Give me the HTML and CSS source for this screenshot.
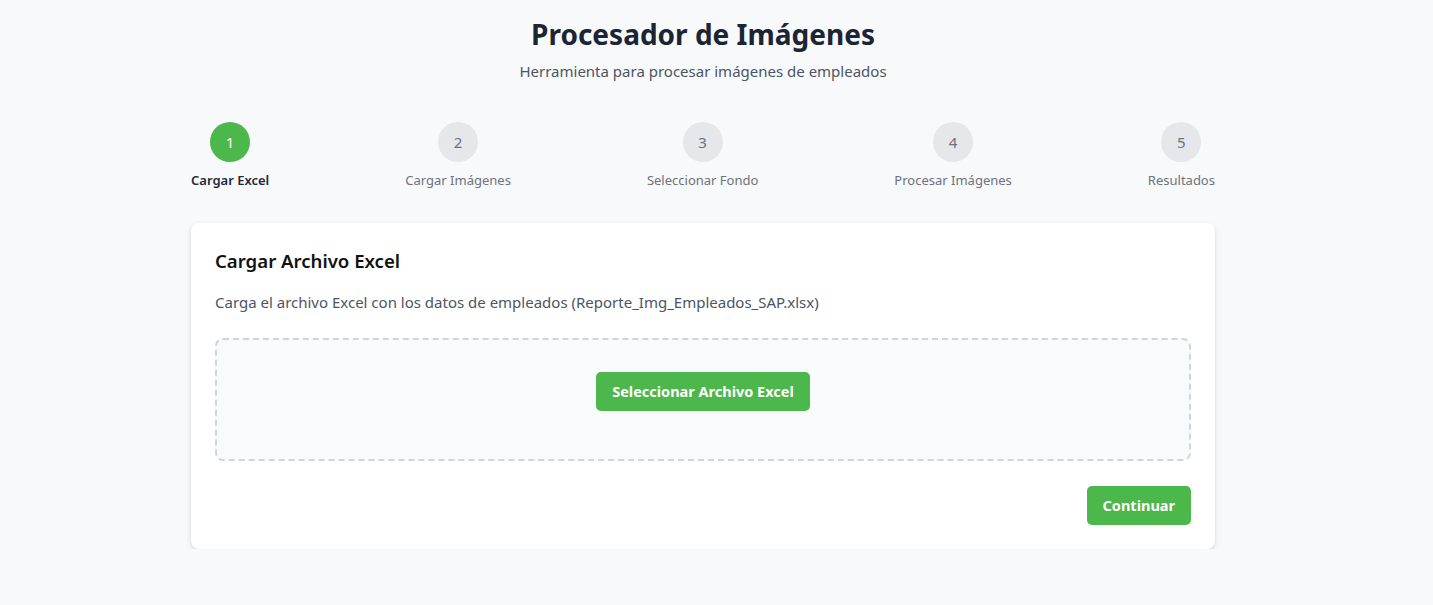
FILE: index.html
```html
<!DOCTYPE html>
<html lang="es">
<head>
<meta charset="utf-8">
<title>Procesador de Imágenes</title>
<link rel="stylesheet" href="styles.css">
</head>
<body>
<div class="page">
  <header class="header">
    <h1 class="title">Procesador de Imágenes</h1>
    <p class="subtitle">Herramienta para procesar imágenes de empleados</p>
  </header>

  <nav class="steps">
    <div class="step active"><span class="circle">1</span><span class="label">Cargar Excel</span></div>
    <div class="step"><span class="circle">2</span><span class="label">Cargar Imágenes</span></div>
    <div class="step"><span class="circle">3</span><span class="label">Seleccionar Fondo</span></div>
    <div class="step"><span class="circle">4</span><span class="label">Procesar Imágenes</span></div>
    <div class="step"><span class="circle">5</span><span class="label">Resultados</span></div>
  </nav>

  <section class="card">
    <h2 class="card-title">Cargar Archivo Excel</h2>
    <p class="card-desc">Carga el archivo Excel con los datos de empleados (Reporte_Img_Empleados_SAP.xlsx)</p>
    <div class="dropzone">
      <button class="btn" type="button">Seleccionar Archivo Excel</button>
    </div>
    <div class="actions">
      <button class="btn" type="button">Continuar</button>
    </div>
  </section>
</div>
</body>
</html>
```

FILE: styles.css
```css
* { box-sizing: border-box; }
html, body { margin: 0; padding: 0; }
body {
  background: #f8f9fb;
  font-family: "Noto Sans", "Open Sans", sans-serif;
  color: #1f2937;
}
.page {
  width: 1024px;
  margin: 0 auto;
  position: relative;
  left: -13.5px;
  padding-top: 16px;
}
.header { text-align: center; }
.title {
  margin: 0;
  font-size: 28px;
  line-height: 36px;
  font-weight: 700;
  color: #1b2533;
}
.subtitle {
  margin: 8px 0 0;
  font-size: 15px;
  line-height: 22px;
  color: #4b5563;
}
.steps {
  margin-top: 40px;
  display: flex;
  justify-content: space-between;
}
.step {
  display: flex;
  flex-direction: column;
  align-items: center;
}
.circle {
  width: 40px;
  height: 40px;
  border-radius: 50%;
  background: #e5e7eb;
  color: #6b7280;
  display: flex;
  align-items: center;
  justify-content: center;
  font-size: 15px;
}
.label {
  margin-top: 9px;
  font-size: 13px;
  line-height: 18px;
  color: #6b7280;
}
.step.active .circle { background: #4cb74a; color: #fff; }
.step.active .label { color: #1f2937; font-weight: 600; }
.card {
  margin-top: 34px;
  background: #fff;
  border-radius: 8px;
  box-shadow: 0 1px 3px rgba(0,0,0,0.1), 0 3px 8px rgba(0,0,0,0.07);
  padding: 24px;
}
.card-title {
  margin: 0;
  font-size: 18.6px;
  line-height: 28px;
  font-weight: 600;
  color: #111;
}
.card-desc {
  margin: 16px 0 0;
  font-size: 15px;
  line-height: 22px;
  color: #4b5563;
}
.dropzone {
  margin-top: 25px;
  border: 2px dashed #d1d5db;
  border-radius: 8px;
  background: #f9fafb;
  padding: 32px 0 48px;
  display: flex;
  justify-content: center;
}
.btn {
  font-family: inherit;
  font-size: 14.5px;
  font-weight: 700;
  line-height: 23px;
  color: #fff;
  background: #4cb74a;
  border: none;
  border-radius: 5px;
  padding: 8px 16px;
  cursor: pointer;
}
.actions {
  margin-top: 25px;
  display: flex;
  justify-content: flex-end;
}
```
